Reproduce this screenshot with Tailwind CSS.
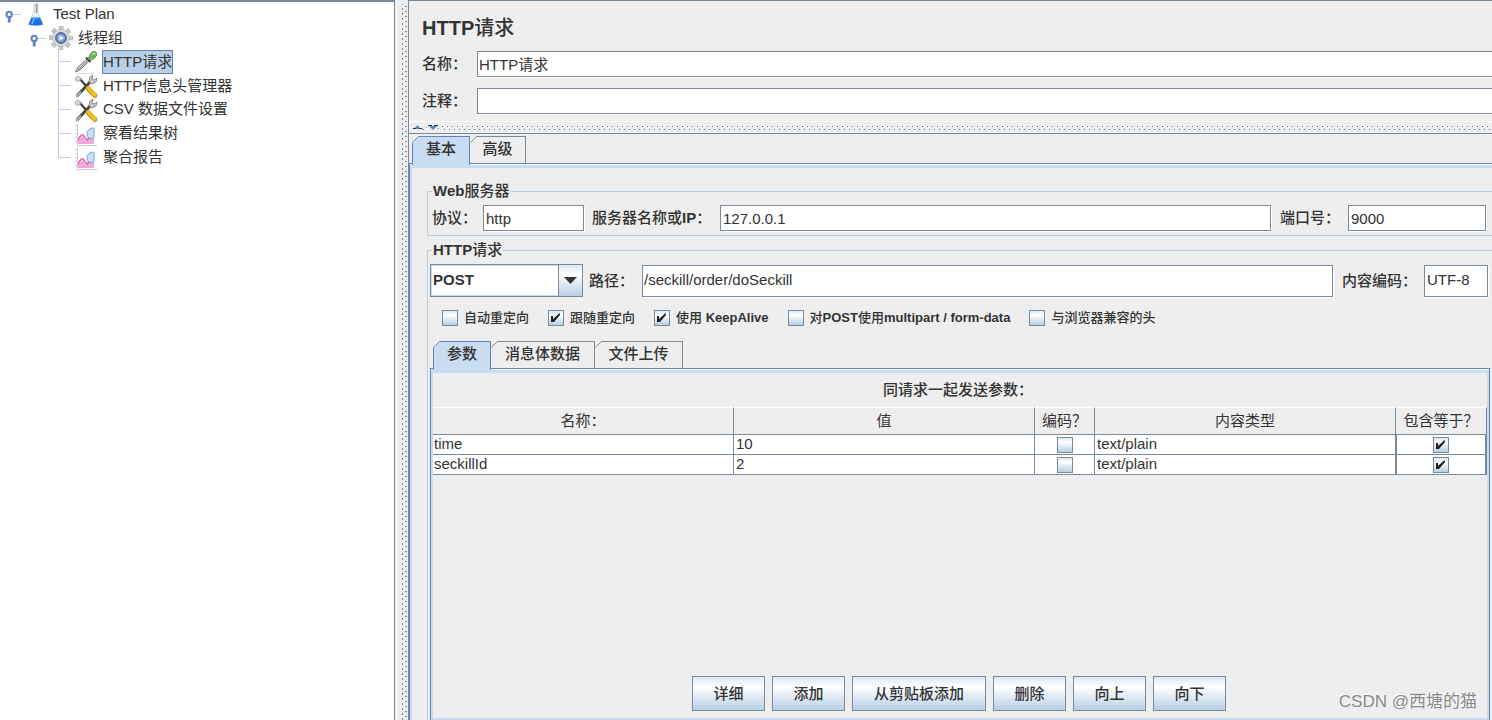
<!DOCTYPE html>
<html lang="zh-CN">
<head>
<meta charset="utf-8">
<title>HTTP请求</title>
<script src="https://cdn.jsdelivr.net/npm/@tailwindcss/browser@4"></script>
</head>
<body class="h-screen overflow-hidden bg-[#eeeeee] font-['Liberation_Sans','Noto_Sans_CJK_SC',sans-serif] text-[15px] leading-5 text-[#333333]">

<svg class="hidden" aria-hidden="true">
  <symbol id="handle" viewBox="0 0 18 24">
    <path d="M8 12.500H18" stroke="#b8cfe5"/>
    <path d="M5.500 15V21" stroke="#6382bf" stroke-width="3"/>
    <circle cx="5.500" cy="12.500" r="2.800" fill="#fff" stroke="#6382bf" stroke-width="2.200"/>
  </symbol>
  <symbol id="tools" viewBox="0 0 24 24">
    <path d="M5 4L14 14" stroke="#3b3b3b" stroke-width="2.200"/>
    <path d="M1 4l3-2 3 2-1 3-4 0z" fill="#d4d4d4" stroke="#999" stroke-width=".6"/>
    <path d="M3 22L16 8" stroke="#4a4a4a" stroke-width="3"/>
    <path d="M2 23L7 18" stroke="#aaa" stroke-width="2"/>
    <path d="M15 8l1-5 3-2-1 4 2 1 3-2-1 4-4 2z" fill="#c9c9c9" stroke="#777" stroke-width=".8"/>
    <path d="M14 14.500L21 21.500" stroke="#b98a08" stroke-width="4.600" stroke-linecap="round"/>
    <path d="M14 14L21 21" stroke="#f3c31c" stroke-width="3.200" stroke-linecap="round"/>
  </symbol>
  <symbol id="chart" viewBox="0 0 24 24">
    <path d="M4 22V17Q7 11 10 14L12 18Q15 13 20 12V22Z" fill="#f2a8dc"/>
    <path d="M4 18Q8 9 11 15L13 18Q15 17 16 14" fill="none" stroke="#d9669a" stroke-width="1.200"/>
    <path d="M20 6Q13 6 13 12Q13 18 20 16Z" fill="#c9dcfb" stroke="#7fa2e0" stroke-width="1"/>
    <path d="M3.500 2V23.500H23" fill="none" stroke="#c8c8c8"/>
    <path d="M1 3.500H3M1 7.500H3M1 11.500H3M1 15.500H3M1 19.500H3" stroke="#d0d0d0"/>
  </symbol>
  <symbol id="tick" viewBox="0 0 16 16">
    <path d="M3 6h2v3L11 3.500h1V5L6 12H3z" fill="#222"/>
  </symbol>
</svg>

<div class="flex h-full">
  <nav class="w-[395px] shrink-0 border-t-2 border-r border-[#7a8a99] bg-white" aria-label="Test Plan">
    <ul>
      <li>
        <div class="flex h-6 items-center pl-1">
          <svg class="h-6 w-[17px]"><use href="#handle"/></svg>
          <svg class="ml-1 h-6 w-[22px]" viewBox="0 0 22 24">
            <path d="M9 3L13 1V10L18 22.500Q11 25 3.500 22.500L9 10Z" fill="#e9eef2" stroke="#c3ccd4" stroke-width=".8"/>
            <path d="M11.500 2V11" stroke="#8b979f" stroke-width="1.500"/>
            <path d="M6.500 15.500H15L18 22.500Q11 24.500 3.500 22.500Z" fill="#1d72dd"/>
            <path d="M6.500 15.500Q11 18 15 15.500" fill="#6db3fa"/>
            <path d="M9 16L7 22" stroke="#76b6ff" stroke-width="1.500"/>
          </svg>
          <span class="ml-[6px]">Test Plan</span>
        </div>
        <ul>
          <li>
            <div class="flex h-6 items-center pl-[29px]">
              <svg class="h-6 w-[17px]"><use href="#handle"/></svg>
              <svg class="ml-[3px] h-6 w-6" viewBox="0 0 24 24">
                <circle cx="12" cy="12" r="10" fill="none" stroke="#9d9d9d" stroke-width="3.500" stroke-dasharray="4.400 3.450" stroke-dashoffset="2.200"/>
                <circle cx="12" cy="12" r="10" fill="none" stroke="#cfcfcf" stroke-width="2.200" stroke-dasharray="3.400 4.450" stroke-dashoffset="1.700"/>
                <circle cx="12" cy="12" r="8.500" fill="#dedede" stroke="#adadad" stroke-width=".8"/>
                <circle cx="12" cy="12" r="5.500" fill="#4a6fa8" stroke="#5f7396"/>
                <circle cx="12" cy="12" r="4" fill="#86a9dc"/>
                <path d="M10.500 9.500L15 12L10.500 14.500Z" fill="#fff"/>
              </svg>
              <span class="ml-[5px]">线程组</span>
            </div>
            <ul class="pl-[58px]">
              <li class="flex h-6 items-center">
                <svg class="h-6 w-3" viewBox="0 0 12 24"><path d="M.5 0V24M0 11.500H12" stroke="#b8cfe5"/></svg>
                <svg class="ml-1 h-6 w-6" viewBox="0 0 24 24">
                  <path d="M1.500 22L4 17L13 9L15 11L6 20Z" fill="#dedede" stroke="#777" stroke-width="1"/>
                  <path d="M4 20L13 11" stroke="#999" stroke-width="1.200"/>
                  <path d="M12 7.500L16.500 12" stroke="#444" stroke-width="2.200"/>
                  <path d="M14.500 8L17 3Q19 0 22 2Q24 5 20.500 8L17 10Z" fill="#6bb860" stroke="#3f8a39" stroke-width=".8"/>
                  <path d="M18 5Q20 2 21.500 4" fill="none" stroke="#b5e3b0" stroke-width="1.300"/>
                  <path d="M2 23.500H20" stroke="#ddd"/>
                </svg>
                <span class="ml-[4px] border border-[#6382bf] bg-[#b8cfe5] leading-[22px]">HTTP请求</span>
              </li>
              <li class="flex h-6 items-center">
                <svg class="h-6 w-3" viewBox="0 0 12 24"><path d="M.5 0V24M0 11.500H12" stroke="#b8cfe5"/></svg>
                <svg class="ml-1 h-6 w-6"><use href="#tools"/></svg>
                <span class="ml-[5px] pb-px">HTTP信息头管理器</span>
              </li>
              <li class="flex h-6 items-center">
                <svg class="h-6 w-3" viewBox="0 0 12 24"><path d="M.5 0V24M0 11.500H12" stroke="#b8cfe5"/></svg>
                <svg class="ml-1 h-6 w-6"><use href="#tools"/></svg>
                <span class="ml-[5px] pb-[2px]">CSV 数据文件设置</span>
              </li>
              <li class="flex h-6 items-center">
                <svg class="h-6 w-3" viewBox="0 0 12 24"><path d="M.5 0V24M0 11.500H12" stroke="#b8cfe5"/></svg>
                <svg class="ml-1 h-6 w-6"><use href="#chart"/></svg>
                <span class="ml-[5px] pb-[2px]">察看结果树</span>
              </li>
              <li class="flex h-6 items-center">
                <svg class="h-6 w-3" viewBox="0 0 12 24"><path d="M.5 0V11.500H12" fill="none" stroke="#b8cfe5"/></svg>
                <svg class="ml-1 h-6 w-6"><use href="#chart"/></svg>
                <span class="ml-[5px] pb-[2px]">聚合报告</span>
              </li>
            </ul>
          </li>
        </ul>
      </li>
    </ul>
  </nav>

  <div class="w-[13px] shrink-0 border-l border-[#eeeeee] bg-white pl-px">
    <svg class="h-full w-full bg-[#eeeeee]" aria-hidden="true">
      <defs><pattern id="bumpsV" width="6" height="5" x="4" y="2" patternUnits="userSpaceOnUse">
        <path d="M0 .5h1M3 3.500h1" stroke="#fff"/><path d="M1 1.500h1M1 2.500h1" stroke="#7a8a99"/><path d="M4 4.500h2" stroke="#7a8a99"/>
      </pattern></defs>
      <rect x="4" y="4" width="6" height="100%" fill="url(#bumpsV)"/>
    </svg>
  </div>

  <main class="flex min-w-0 flex-1 flex-col border-t border-l border-[#7a8a99]">
    <header class="pt-[13px] pl-[13px]">
      <h1 class="text-[20px] leading-7"><span class="font-bold">HTTP</span><span class="font-medium">请求</span></h1>
      <div class="mt-[9px] flex items-center">
        <label for="name" class="w-[55px] shrink-0 font-medium">名称：</label>
        <input id="name" value="HTTP请求" class="h-[26px] min-w-0 flex-1 border border-r-0 border-[#7a8a99] bg-white px-px pb-[2px] shadow-[1px_1px_0_#fff] outline-none">
      </div>
      <div class="mt-[11px] flex items-center">
        <label for="comment" class="w-[55px] shrink-0 font-medium">注释：</label>
        <input id="comment" value="" class="h-[26px] min-w-0 flex-1 border border-r-0 border-[#7a8a99] bg-white px-px pb-[2px] shadow-[1px_1px_0_#fff] outline-none">
      </div>
    </header>

    <div class="mt-[7px] flex h-3 items-center border-t border-white pl-1">
      <svg class="h-[6px] w-7 shrink-0" viewBox="0 0 28 6" aria-hidden="true">
        <path d="M1 4L4.500 0L8 4Z" fill="#6382bf"/><path d="M0 3.500H3M6 3.500H9" stroke="#333"/>
        <path d="M16 1H24L20 5Z" fill="#6382bf"/><path d="M15 .5H19M21 .5H25" stroke="#333"/>
        <path d="M9 4.500H11M13 2.500H14M25 3.500H26" stroke="#7a8a99"/>
      </svg>
      <svg class="h-[6px] min-w-0 flex-1" aria-hidden="true">
        <defs><pattern id="bumpsH" width="5" height="6" patternUnits="userSpaceOnUse">
          <path d="M0 .5h1M2 2.500h1" stroke="#fff"/><path d="M1 1.500h1M3 4.500h1" stroke="#5f6f7e"/>
        </pattern></defs>
        <rect width="100%" height="6" fill="url(#bumpsH)"/>
      </svg>
    </div>

    <div class="flex border-t border-[#7a8a99] pt-[2px] pl-[3px]" role="tablist">
      <button role="tab" aria-selected="true" class="relative z-10 -mb-[2px] h-[29px] w-[58px] border-t border-r border-l border-[#6382bf] bg-[#c8ddf2] pb-[5px] font-medium">基本
        <svg class="absolute -top-px -left-px h-2 w-2" viewBox="0 0 8 8"><path d="M0 0H8L0 8Z" fill="#eee"/><path d="M.5 8V6.500L6.500 .5H8" fill="none" stroke="#6382bf"/></svg>
      </button>
      <button role="tab" aria-selected="false" class="relative h-[27px] w-14 border-t border-r border-[#7a8a99] pb-[3px] font-medium">高级
        <svg class="absolute -top-px left-0 h-2 w-2" viewBox="0 0 8 8"><path d="M0 0H8L0 8Z" fill="#eee"/><path d="M.5 6.500L6.500 .5H8" fill="none" stroke="#7a8a99"/></svg>
      </button>
    </div>

    <section class="flex min-h-0 flex-1 flex-col border-t border-l border-[#6382bf] bg-white pt-px">
      <div class="flex min-h-0 flex-1 flex-col border-t-[3px] border-l-2 border-[#c8ddf2] bg-[#eeeeee] pt-[13px] pl-[15px]">

        <fieldset class="min-w-0 border border-r-0 border-[#b8cfe5]">
          <legend class="ml-[4px] px-px leading-5"><span class="font-bold">Web</span><span class="font-medium">服务器</span></legend>
          <div class="flex items-center py-1 pr-[6px] pl-1">
            <label for="protocol" class="w-[51px] shrink-0 font-medium">协议：</label>
            <input id="protocol" value="http" class="h-[26px] w-[101px] border border-[#7a8a99] bg-white px-[2px] shadow-[1px_1px_0_#fff] outline-none">
            <label for="server" class="ml-2 w-32 shrink-0 font-medium">服务器名称或<span class="font-bold">IP</span>：</label>
            <input id="server" value="127.0.0.1" class="h-[26px] min-w-0 flex-1 border border-[#7a8a99] bg-white px-[2px] shadow-[1px_1px_0_#fff] outline-none">
            <label for="port" class="ml-[9px] w-[68px] shrink-0 font-medium">端口号：</label>
            <input id="port" value="9000" class="h-[26px] w-[138px] border border-[#7a8a99] bg-white px-[2px] shadow-[1px_1px_0_#fff] outline-none">
          </div>
        </fieldset>

        <fieldset class="mt-1 flex min-h-0 min-w-0 flex-1 flex-col border-t border-l border-[#b8cfe5]">
          <legend class="ml-[4px] px-px leading-5"><span class="font-bold">HTTP</span><span class="font-medium">请求</span></legend>
          <div class="flex items-center pt-1 pr-1 pl-[2px]">
            <div class="relative h-[33px] w-[153px] shrink-0">
              <select aria-label="方法" class="h-full w-full appearance-none border border-[#7a8a99] bg-white pb-[2px] pl-[2px] font-bold shadow-[inset_0_0_0_1px_#c8ddf2] outline-none">
                <option>POST</option><option>GET</option>
              </select>
              <span class="pointer-events-none absolute top-0 right-0 flex h-full w-[25px] items-center justify-center border border-[#7a8a99] bg-linear-to-b from-[#dde8f3] via-white via-30% to-[#b8cfe5]">
                <svg class="h-[7px] w-[13px]" viewBox="0 0 13 7"><path d="M0 0H13L6.500 7Z" fill="#333"/></svg>
              </span>
            </div>
            <label for="path" class="ml-[6px] w-[53px] shrink-0 font-medium">路径：</label>
            <input id="path" value="/seckill/order/doSeckill" class="h-8 min-w-0 flex-1 border border-[#7a8a99] bg-white px-px pb-[2px] shadow-[1px_1px_0_#fff] outline-none">
            <label for="encoding" class="ml-[9px] w-[82px] shrink-0 font-medium">内容编码：</label>
            <input id="encoding" value="UTF-8" class="h-8 w-16 border border-[#7a8a99] bg-white px-[2px] pb-[2px] shadow-[1px_1px_0_#fff] outline-none">
          </div>

          <div class="mt-[13px] flex gap-[19px] pl-[14px] text-[13px] leading-4">
            <label class="flex items-center gap-[6px] font-medium whitespace-nowrap"><input type="checkbox" class="h-4 w-4 appearance-none border border-[#7a8a99] bg-linear-to-b from-[#dde8f3] via-white via-30% to-[#b8cfe5]">自动重定向</label>
            <label class="relative flex items-center gap-[6px] font-medium whitespace-nowrap"><input type="checkbox" checked class="peer h-4 w-4 appearance-none border border-[#7a8a99] bg-linear-to-b from-[#dde8f3] via-white via-30% to-[#b8cfe5]"><svg class="absolute left-0 hidden h-4 w-4 peer-checked:block"><use href="#tick"/></svg>跟随重定向</label>
            <label class="relative flex items-center gap-[6px] font-medium whitespace-nowrap"><input type="checkbox" checked class="peer h-4 w-4 appearance-none border border-[#7a8a99] bg-linear-to-b from-[#dde8f3] via-white via-30% to-[#b8cfe5]"><svg class="absolute left-0 hidden h-4 w-4 peer-checked:block"><use href="#tick"/></svg><span>使用 <span class="font-bold">KeepAlive</span></span></label>
            <label class="flex items-center gap-[6px] font-medium whitespace-nowrap"><input type="checkbox" class="h-4 w-4 appearance-none border border-[#7a8a99] bg-linear-to-b from-[#dde8f3] via-white via-30% to-[#b8cfe5]"><span>对<span class="font-bold">POST</span>使用<span class="font-bold">multipart / form-data</span></span></label>
            <label class="flex items-center gap-[6px] font-medium whitespace-nowrap"><input type="checkbox" class="h-4 w-4 appearance-none border border-[#7a8a99] bg-linear-to-b from-[#dde8f3] via-white via-30% to-[#b8cfe5]">与浏览器兼容的头</label>
          </div>

          <div class="mt-[15px] flex pl-[5px]" role="tablist">
            <button role="tab" aria-selected="true" class="relative z-10 -mb-[2px] h-[29px] w-[58px] border-t border-r border-l border-[#6382bf] bg-[#c8ddf2] pb-[5px] font-medium">参数
              <svg class="absolute -top-px -left-px h-2 w-2" viewBox="0 0 8 8"><path d="M0 0H8L0 8Z" fill="#eee"/><path d="M.5 8V6.500L6.500 .5H8" fill="none" stroke="#6382bf"/></svg>
            </button>
            <button role="tab" aria-selected="false" class="relative h-[27px] w-[104px] border-t border-r border-[#7a8a99] pb-[3px] font-medium">消息体数据
              <svg class="absolute -top-px left-0 h-2 w-2" viewBox="0 0 8 8"><path d="M0 0H8L0 8Z" fill="#eee"/><path d="M.5 6.500L6.500 .5H8" fill="none" stroke="#7a8a99"/></svg>
            </button>
            <button role="tab" aria-selected="false" class="relative h-[27px] w-[88px] border-t border-r border-[#7a8a99] pb-[3px] font-medium">文件上传
              <svg class="absolute -top-px left-0 h-2 w-2" viewBox="0 0 8 8"><path d="M0 0H8L0 8Z" fill="#eee"/><path d="M.5 6.500L6.500 .5H8" fill="none" stroke="#7a8a99"/></svg>
            </button>
          </div>

          <div class="mr-[2px] ml-[2px] flex min-h-0 flex-1 flex-col border-x border-t border-[#6382bf] bg-white pt-px">
            <div class="flex min-h-0 flex-1 flex-col border-2 border-t-[3px] border-[#c8ddf2] bg-[#eeeeee] pb-[7px]">
              <h2 class="py-[7px] pr-1 text-center leading-5 font-medium">同请求一起发送参数：</h2>
              <table class="w-full table-fixed border-separate border-spacing-0">
                <colgroup><col><col><col class="w-[60px]"><col><col class="w-[91px]"></colgroup>
                <thead>
                  <tr class="h-7">
                    <th class="border-t border-r border-b border-t-white border-r-[#7a8a99] border-b-[#7a8a99] font-normal">名称：</th>
                    <th class="border-t border-r border-b border-t-white border-r-[#7a8a99] border-b-[#7a8a99] font-normal">值</th>
                    <th class="border-t border-r border-b border-t-white border-r-[#7a8a99] border-b-[#7a8a99] font-normal whitespace-nowrap">编码？</th>
                    <th class="border-t border-r border-b border-t-white border-r-[#7a8a99] border-b-[#7a8a99] font-normal">内容类型</th>
                    <th class="border-t border-r border-b border-t-white border-r-[#7a8a99] border-b-[#7a8a99] font-normal whitespace-nowrap">包含等于？</th>
                  </tr>
                </thead>
                <tbody class="bg-white leading-[18px]">
                  <tr class="h-5">
                    <td class="border-r border-b border-[#7a8a99] pb-px pl-px">time</td>
                    <td class="border-r border-b border-[#7a8a99] pb-px pl-[2px]">10</td>
                    <td class="border-r border-b border-[#7a8a99]"><input type="checkbox" aria-label="编码 time" class="mx-auto block h-4 w-4 appearance-none border border-[#7a8a99] bg-linear-to-b from-[#dde8f3] via-white via-30% to-[#b8cfe5]"></td>
                    <td class="border-r border-b border-[#7a8a99] pb-px pl-[2px]">text/plain</td>
                    <td class="border-r-2 border-b border-l border-[#7a8a99]"><span class="relative mx-auto block h-4 w-4"><input type="checkbox" checked aria-label="包含等于 time" class="peer block h-4 w-4 appearance-none border border-[#7a8a99] bg-linear-to-b from-[#dde8f3] via-white via-30% to-[#b8cfe5]"><svg class="absolute top-0 left-0 hidden h-4 w-4 peer-checked:block"><use href="#tick"/></svg></span></td>
                  </tr>
                  <tr class="h-5">
                    <td class="border-r border-b border-[#7a8a99] pb-px pl-px">seckillId</td>
                    <td class="border-r border-b border-[#7a8a99] pb-px pl-[2px]">2</td>
                    <td class="border-r border-b border-[#7a8a99]"><input type="checkbox" aria-label="编码 seckillId" class="mx-auto block h-4 w-4 appearance-none border border-[#7a8a99] bg-linear-to-b from-[#dde8f3] via-white via-30% to-[#b8cfe5]"></td>
                    <td class="border-r border-b border-[#7a8a99] pb-px pl-[2px]">text/plain</td>
                    <td class="border-r-2 border-b border-l border-[#7a8a99]"><span class="relative mx-auto block h-4 w-4"><input type="checkbox" checked aria-label="包含等于 seckillId" class="peer block h-4 w-4 appearance-none border border-[#7a8a99] bg-linear-to-b from-[#dde8f3] via-white via-30% to-[#b8cfe5]"><svg class="absolute top-0 left-0 hidden h-4 w-4 peer-checked:block"><use href="#tick"/></svg></span></td>
                  </tr>
                </tbody>
              </table>
              <div class="mt-auto flex justify-center gap-[7px] pr-[2px]">
                <button class="h-[35px] w-[73px] border border-[#7a8a99] bg-linear-to-b from-[#dde8f3] via-white via-30% to-[#b8cfe5] font-medium">详细</button>
                <button class="h-[35px] w-[73px] border border-[#7a8a99] bg-linear-to-b from-[#dde8f3] via-white via-30% to-[#b8cfe5] font-medium">添加</button>
                <button class="h-[35px] w-[134px] border border-[#7a8a99] bg-linear-to-b from-[#dde8f3] via-white via-30% to-[#b8cfe5] font-medium">从剪贴板添加</button>
                <button class="h-[35px] w-[73px] border border-[#7a8a99] bg-linear-to-b from-[#dde8f3] via-white via-30% to-[#b8cfe5] font-medium">删除</button>
                <button class="h-[35px] w-[73px] border border-[#7a8a99] bg-linear-to-b from-[#dde8f3] via-white via-30% to-[#b8cfe5] font-medium">向上</button>
                <button class="h-[35px] w-[73px] border border-[#7a8a99] bg-linear-to-b from-[#dde8f3] via-white via-30% to-[#b8cfe5] font-medium">向下</button>
              </div>
            </div>
          </div>
        </fieldset>
      </div>
    </section>
  </main>
</div>

<p class="pointer-events-none absolute right-[15px] bottom-2 text-[17px] leading-5 text-[#888888] [text-shadow:-1px_-1px_0_#fff]">CSDN @西塘的猫</p>
</body>
</html>
